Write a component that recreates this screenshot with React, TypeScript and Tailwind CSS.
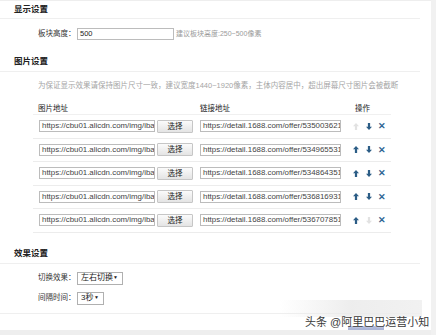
import React from "react";

const rows = [
  { img: "https://cbu01.alicdn.com/img/ibank/", link: "https://detail.1688.com/offer/535003621", up: false, down: true },
  { img: "https://cbu01.alicdn.com/img/ibank/", link: "https://detail.1688.com/offer/534965531", up: true, down: true },
  { img: "https://cbu01.alicdn.com/img/ibank/", link: "https://detail.1688.com/offer/534864351", up: true, down: true },
  { img: "https://cbu01.alicdn.com/img/ibank/", link: "https://detail.1688.com/offer/536816931", up: true, down: true },
  { img: "https://cbu01.alicdn.com/img/ibank/", link: "https://detail.1688.com/offer/536707851", up: true, down: false },
];

const Arrow = ({ dir, on }: { dir: "up" | "down"; on: boolean }) => (
  <svg
    width="6"
    height="7"
    viewBox="0 0 7 8"
    className={on ? "text-[#2c5d86]" : "text-[#e2e2e2]"}
    style={{ transform: dir === "down" ? "rotate(180deg)" : undefined }}
  >
    <path d="M3.5 0 L7 3.8 L4.8 3.8 L4.8 8 L2.2 8 L2.2 3.8 L0 3.8 Z" fill="currentColor" />
  </svg>
);

const SectionTitle = ({ children, className }: { children: string; className?: string }) => (
  <div className={`flex items-center pl-[14px] mr-[11px] border-b border-[#efefef] font-bold text-[8.5px] text-[#222] ${className ?? ""}`}>
    {children}
  </div>
);

const Select = ({ value, w }: { value: string; w: string }) => (
  <div className={`flex h-[13px] items-center justify-between border border-[#b0b0b0] bg-white pl-[3px] pr-[4px] text-[8px] text-[#222] ${w}`}>
    <span>{value}</span>
    <span className="text-[5px]">▼</span>
  </div>
);

export default function App() {
  return (
    <div
      className="relative flex h-[335px] w-[436px] overflow-hidden bg-white text-[#333]"
      style={{ fontFamily: '"Liberation Sans", "Noto Sans CJK SC", sans-serif' }}
    >
      <div className="flex w-[431px] flex-col border-t border-[#eeeeee]">
        <SectionTitle className="h-[18px]">显示设置</SectionTitle>

        <div className="mt-[9px] flex h-[12px] items-center pl-[38px] text-[7.5px]">
          <span className="w-[39px]">板块高度：</span>
          <div className="flex h-[12px] w-[97px] items-center border border-[#bcbcbc] pl-[2px] text-[7.5px] text-[#222]">500</div>
          <span className="ml-[2px] text-[7px] text-[#9a9a9a]">建议板块高度:250~500像素</span>
        </div>

        <SectionTitle className="mt-[12px] h-[20px]">图片设置</SectionTitle>

        <div className="mt-[9px] flex h-[10px] items-center pl-[38px] text-[7.5px] text-[#a5a5a5] whitespace-nowrap">
          为保证显示效果请保持图片尺寸一致，建议宽度1440~1920像素，主体内容居中，超出屏幕尺寸图片会被截断
        </div>

        <div className="ml-[33px] mt-[12px] w-[358px]">
          <div className="flex h-[12px] items-center border-b border-[#f0f0f0] text-[7.5px] text-[#222]">
            <span className="ml-[5px] w-[162px]">图片地址</span>
            <span className="w-[155px]">链接地址</span>
            <span>操作</span>
          </div>
          {rows.map((r, i) => (
            <div key={i} className="flex h-[23.5px] items-center border-b border-[#ececec]">
              <div className="ml-[6px] flex h-[12px] w-[116px] items-center overflow-hidden whitespace-nowrap border border-[#bcbcbc] pl-[2px] text-[7.9px] text-[#444]">
                {r.img}
              </div>
              <div className="ml-[2px] flex h-[13px] w-[36px] items-center justify-center rounded-[1px] border border-[#c6c6c6] bg-gradient-to-b from-[#fbfbfb] to-[#e4e4e4] text-[7.5px] text-[#222]">
                选择
              </div>
              <div className="ml-[7px] flex h-[12px] w-[141px] items-center overflow-hidden whitespace-nowrap border border-[#bcbcbc] pl-[2px] text-[7.9px] text-[#444]">
                {r.link}
              </div>
              <div className="ml-[12px] flex items-center">
                <Arrow dir="up" on={r.up} />
                <span className="ml-[7px]">
                  <Arrow dir="down" on={r.down} />
                </span>
                <span className="ml-[6px] text-[8.5px] font-bold leading-none text-[#2f6594]">✕</span>
              </div>
            </div>
          ))}
        </div>

        <SectionTitle className="mt-[11px] h-[20px]">效果设置</SectionTitle>

        <div className="mt-[8px] flex items-center pl-[38px] text-[7.5px]">
          <span className="w-[39px]">切换效果：</span>
          <Select value="左右切换" w="w-[46px]" />
        </div>
        <div className="mt-[7px] flex items-center pl-[38px] text-[7.5px]">
          <span className="w-[39px]">间隔时间：</span>
          <Select value="3秒" w="w-[27px]" />
        </div>

        <div className="mr-[11px] mt-[8px] border-b border-[#efefef]" />
        <div className="flex-1" />
        <div className="h-[5px] bg-[#eeeeee]" />
      </div>
      <div className="flex-1 bg-[#f1f1f1]" />

      <div className="absolute left-[280px] top-[300px] h-[17px] w-[142px] bg-gradient-to-r from-transparent via-[#e9e9e9] to-[#eeeeee] opacity-80" />
      <div className="absolute left-[348px] top-[326px] h-[4px] w-[36px] bg-[#8796c8] opacity-70" />
      <div
        className="absolute left-[305px] top-[315px] whitespace-nowrap text-[11px] leading-[14px] text-[#3a3a3a]"
        style={{ textShadow: "0 0 2px #fff" }}
      >
        头条 @阿里巴巴运营小知
      </div>
    </div>
  );
}
